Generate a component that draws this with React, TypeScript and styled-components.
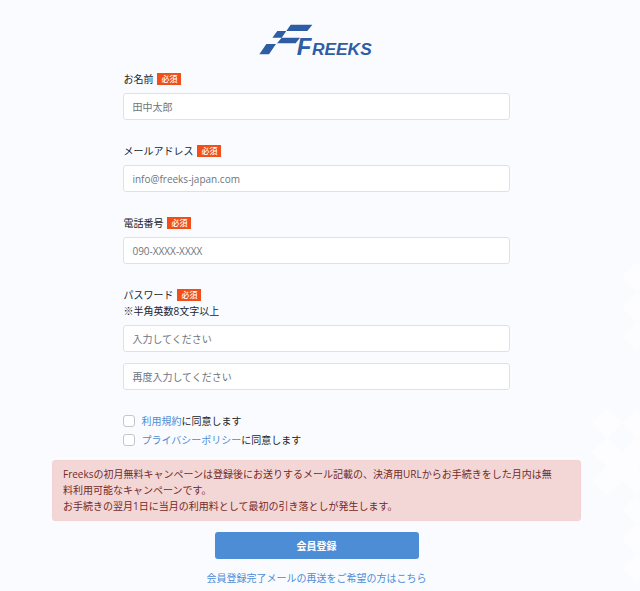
import React from "react";
import styled, { createGlobalStyle } from "styled-components";

const GlobalStyle = createGlobalStyle`
  *, *::before, *::after { box-sizing: border-box; }
  body {
    margin: 0;
    background: #fafbff;
    color: #212529;
    font-family: "Open Sans", "Noto Sans CJK JP", sans-serif;
    font-size: 10px;
    line-height: 16px;
  }
`;

const Page = styled.div`
  position: relative;
  overflow: hidden;
  min-height: 100vh;
  padding: 24px 59px 5px 52px;
`;

const Pattern = styled.svg`
  position: absolute;
  top: 0;
  right: 0;
  fill: #fdfdff;
`;

const Form = styled.form`
  position: relative;
  display: flex;
  flex-direction: column;
  align-items: center;
  max-width: 720px;
  margin: 0 auto;
`;

const Logo = styled.svg`
  display: block;
  width: 116px;
  height: 37px;
  fill: #2f5da3;
`;

const LogoText = styled.text<{ $size: number }>`
  font-family: "Liberation Sans", sans-serif;
  font-size: ${({ $size }) => $size}px;
  font-weight: 700;
  font-style: italic;
`;

const Fields = styled.div`
  display: flex;
  flex-direction: column;
  gap: 23px;
  width: 73%;
  margin-top: 10px;
`;

const Field = styled.div`
  display: flex;
  flex-direction: column;
`;

const Label = styled.label`
  display: flex;
  align-items: center;
  gap: 4px;
  font-size: 10px;
`;

const Required = styled.span`
  padding: 0 4px;
  background: #f04e1b;
  color: #fff;
  font-size: 8px;
  font-weight: 500;
  line-height: 12px;
`;

const Note = styled.p`
  margin: 0;
`;

const Input = styled.input<{ $gap?: number }>`
  width: 100%;
  height: 27px;
  margin-top: ${({ $gap = 6 }) => $gap}px;
  padding: 0 8px;
  border: 1px solid #dee2e6;
  border-radius: 3px;
  background: #fff;
  color: #495057;
  font: inherit;
  &::placeholder { color: #6c757d; opacity: 1; }
`;

const Agreements = styled.div`
  width: 73%;
  margin-top: 21px;
`;

const Agreement = styled.div`
  display: flex;
  align-items: center;
  gap: 6px;
  height: 19px;
`;

const Checkbox = styled.input`
  appearance: none;
  width: 12px;
  height: 12px;
  margin: 0;
  border: 1px solid #c3c6ca;
  border-radius: 3px;
  background: #fff;
  &:checked { background: #4d8dd6; border-color: #4d8dd6; }
`;

const Link = styled.a`
  color: #4d8dd6;
  text-decoration: none;
`;

const Notice = styled.div`
  width: 100%;
  margin-top: 11px;
  padding: 5px 24px 6px 10px;
  border: 1px solid #f1d3d3;
  border-radius: 3px;
  background: #f3d7d7;
  color: #712b29;
  p { margin: 0; }
`;

const Submit = styled.button`
  width: 204px;
  height: 27px;
  margin: 11px 0;
  padding: 0;
  border: 0;
  border-radius: 3px;
  background: #4d8dd6;
  color: #fff;
  font: inherit;
  font-weight: 700;
  cursor: pointer;
`;

const diamonds = [
  [48, 277], [48, 307], [48, 337],
  [18, 423], [48, 423],
  [18, 452], [48, 452], [33, 467],
  [18, 481], [48, 481],
  [48, 510], [48, 539], [48, 569],
];

const fields = [
  { id: "name", label: "お名前", type: "text", placeholder: "田中太郎" },
  { id: "email", label: "メールアドレス", type: "email", placeholder: "info@freeks-japan.com" },
  { id: "phone", label: "電話番号", type: "tel", placeholder: "090-XXXX-XXXX" },
];

const agreements = [
  { id: "terms", label: "利用規約" },
  { id: "privacy", label: "プライバシーポリシー" },
];

export default function App() {
  return (
    <>
      <GlobalStyle />
      <Page>
        <Pattern width="51" height="591" aria-hidden="true">
          {diamonds.map(([x, y]) => (
            <path key={`${x}-${y}`} d={`M${x - 15} ${y}l15-15 15 15-15 15z`} />
          ))}
        </Pattern>
        <Form onSubmit={(e) => e.preventDefault()}>
          <Logo viewBox="28 26 348 111" role="img" aria-label="Freeks">
            <path d="M123 28h65l-15 19h-63zM83 47h27l-14 20H68zM96 67h55l-13 17H82zM50 86h29l-21 31H29z" />
            <LogoText $size={72} x="141" y="119">F</LogoText>
            <LogoText $size={52} x="187" y="119">REEKS</LogoText>
          </Logo>
          <Fields>
            {fields.map((f) => (
              <Field key={f.id}>
                <Label htmlFor={f.id}>
                  {f.label}
                  <Required>必須</Required>
                </Label>
                <Input id={f.id} type={f.type} placeholder={f.placeholder} />
              </Field>
            ))}
            <Field>
              <Label htmlFor="password">
                パスワード
                <Required>必須</Required>
              </Label>
              <Note>※半角英数8文字以上</Note>
              <Input id="password" type="password" placeholder="入力してください" />
              <Input
                $gap={11}
                type="password"
                aria-label="パスワード"
                placeholder="再度入力してください"
              />
            </Field>
          </Fields>
          <Agreements>
            {agreements.map((a) => (
              <Agreement key={a.id}>
                <Checkbox id={a.id} type="checkbox" />
                <label htmlFor={a.id}>
                  <Link href="#">{a.label}</Link>に同意します
                </label>
              </Agreement>
            ))}
          </Agreements>
          <Notice>
            <p>
              Freeksの初月無料キャンペーンは登録後にお送りするメール記載の、決済用URLからお手続きをした月内は無料利用可能なキャンペーンです。
            </p>
            <p>お手続きの翌月1日に当月の利用料として最初の引き落としが発生します。</p>
          </Notice>
          <Submit type="submit">会員登録</Submit>
          <Link href="#">会員登録完了メールの再送をご希望の方はこちら</Link>
        </Form>
      </Page>
    </>
  );
}
